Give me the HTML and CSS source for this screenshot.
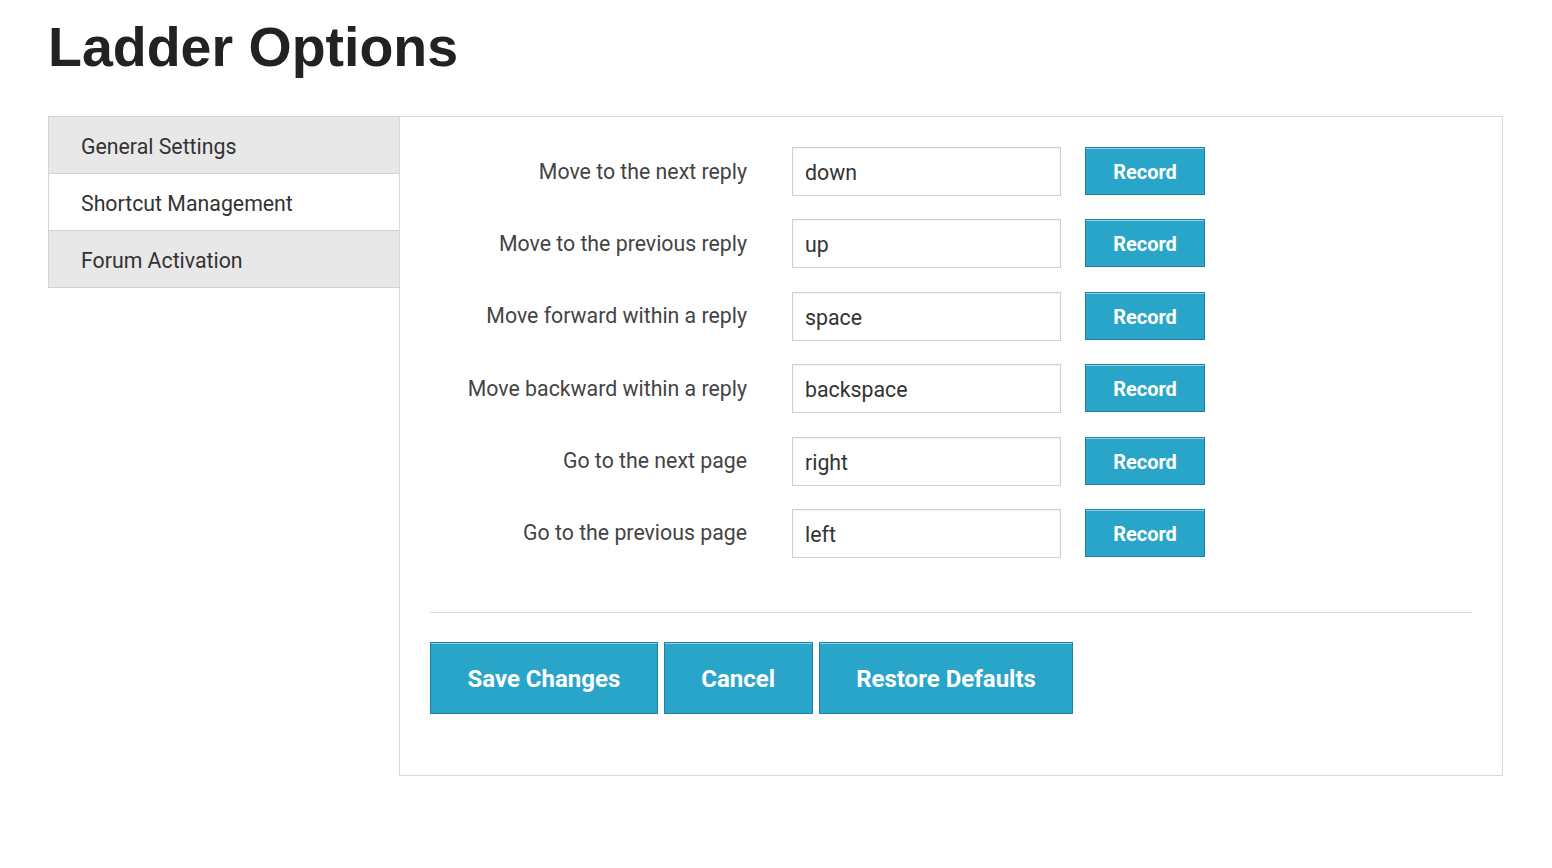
FILE: index.html
```html
<!DOCTYPE html>
<html>
<head>
<meta charset="utf-8">
<title>Ladder Options</title>
<link rel="stylesheet" href="styles.css">
</head>
<body>
<h1 class="title">Ladder Options</h1>
<div class="layout">
  <nav class="sidebar">
    <div class="nav-item">General Settings</div>
    <div class="nav-item active">Shortcut Management</div>
    <div class="nav-item">Forum Activation</div>
  </nav>
  <section class="panel">
    <div class="rows">
      <div class="row"><label class="label">Move to the next reply</label><input class="field" value="down"><button class="record">Record</button></div>
      <div class="row"><label class="label">Move to the previous reply</label><input class="field" value="up"><button class="record">Record</button></div>
      <div class="row"><label class="label">Move forward within a reply</label><input class="field" value="space"><button class="record">Record</button></div>
      <div class="row"><label class="label">Move backward within a reply</label><input class="field" value="backspace"><button class="record">Record</button></div>
      <div class="row"><label class="label">Go to the next page</label><input class="field" value="right"><button class="record">Record</button></div>
      <div class="row"><label class="label">Go to the previous page</label><input class="field" value="left"><button class="record">Record</button></div>
    </div>
    <hr class="divider">
    <div class="actions">
      <button class="big">Save Changes</button>
      <button class="big">Cancel</button>
      <button class="big">Restore Defaults</button>
    </div>
  </section>
</div>
</body>
</html>
```
FILE: styles.css
```css
* { box-sizing: border-box; }
body {
  margin: 0;
  padding: 0 49px 0 48px;
  background: #fff;
  font-family: Roboto, "Liberation Sans", sans-serif;
  color: #333;
}
.title {
  margin: 0;
  padding-top: 20px;
  height: 116px;
  font-family: "Liberation Sans", Arial, sans-serif;
  font-weight: bold;
  font-size: 55.5px;
  line-height: 54px;
  color: #222;
}
.layout {
  display: flex;
  align-items: flex-start;
}
.sidebar {
  width: 351px;
  flex: none;
  display: flex;
  flex-direction: column;
}
.nav-item {
  height: 58px;
  padding-left: 32px;
  padding-top: 2px;
  display: flex;
  align-items: center;
  font-size: 21.3px;
  color: #333;
  background: #e8e8e8;
  border: 1px solid #d4d4d4;
  border-right: none;
}
.nav-item.active {
  height: 56px;
  background: #fff;
  border-top: none;
  border-bottom: none;
}
.panel {
  flex: 1;
  border: 1px solid #d9d9d9;
  padding: 30px 30px 61px 30px;
  min-height: 660px;
}
.rows {
  display: flex;
  flex-direction: column;
  gap: 23.4px;
}
.row {
  display: flex;
  align-items: center;
  height: 49px;
}
.label {
  width: 317px;
  text-align: right;
  font-size: 21.3px;
  color: #444;
  margin-right: 45px;
  margin-bottom: 1px;
}
.field {
  width: 269px;
  height: 49px;
  border: 1px solid #cfcfcf;
  box-shadow: inset 0 1px 2px rgba(0,0,0,0.06);
  padding: 2px 12px 0 12px;
  font-family: Roboto, sans-serif;
  font-size: 21.3px;
  color: #333;
  margin-right: 24px;
  outline: none;
}
.record, .big {
  background: #2aa5ca;
  border: 1px solid #1f82a3;
  box-shadow: inset 0 1px 0 #8fd3e8;
  color: #fff;
  font-family: Roboto, sans-serif;
  font-weight: bold;
  cursor: pointer;
  padding: 0;
}
.record {
  width: 120px;
  height: 48px;
  font-size: 20px;
  padding-top: 2px;
  align-self: flex-start;
}
.divider {
  border: none;
  border-top: 1px solid #dcdcdc;
  margin: 54px 0 29px 0;
  height: 0;
}
.actions {
  display: flex;
  gap: 6px;
}
.big {
  height: 72px;
  padding: 3px 36.5px 0 36.5px;
  font-size: 24px;
}
```
